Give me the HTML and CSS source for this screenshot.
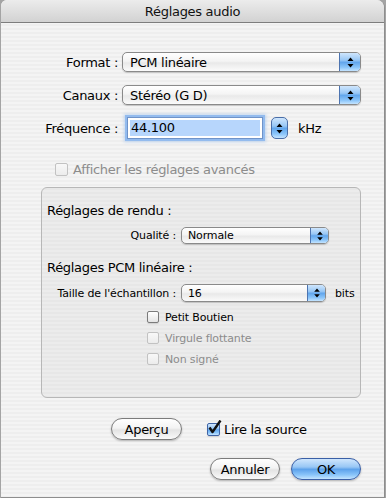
FILE: index.html
```html
<!DOCTYPE html>
<html lang="fr">
<head>
    <meta charset="UTF-8">
    <title>Réglages audio</title>
    <link rel="stylesheet" href="styles.css">
</head>
<body>
    <div class="window">
        <div class="titlebar">Réglages audio</div>

        <div class="content">
            <div class="row row-format">
                <span class="lbl">Format :</span>
                <div class="popup big format">
                    <span class="val">PCM linéaire</span>
                    <span class="cap">
                        <svg width="7" height="11" viewBox="0 0 7 11"><path d="M3.5 0.5 L6.5 4 L0.5 4 Z M0.5 7 L6.5 7 L3.5 10.5 Z" fill="#000"/></svg>
                    </span>
                </div>
            </div>

            <div class="row row-canaux">
                <span class="lbl">Canaux :</span>
                <div class="popup big format">
                    <span class="val">Stéréo (G D)</span>
                    <span class="cap">
                        <svg width="7" height="11" viewBox="0 0 7 11"><path d="M3.5 0.5 L6.5 4 L0.5 4 Z M0.5 7 L6.5 7 L3.5 10.5 Z" fill="#000"/></svg>
                    </span>
                </div>
            </div>

            <div class="row row-freq">
                <span class="lbl">Fréquence :</span>
                <div class="textfield"><span class="sel">44.100</span></div>
                <div class="stepper">
                    <svg width="7" height="11" viewBox="0 0 7 11"><path d="M3.5 0.5 L6.5 4 L0.5 4 Z M0.5 7 L6.5 7 L3.5 10.5 Z" fill="#000"/></svg>
                </div>
                <span class="unit">kHz</span>
            </div>

            <div class="row row-advanced">
                <span class="cb disabled"></span>
                <span class="cb-text disabled-text">Afficher les réglages avancés</span>
            </div>

            <div class="groupbox">
                <div class="group-title">Réglages de rendu :</div>
                <div class="row row-small row-qualite">
                    <span class="lbl-small">Qualité :</span>
                    <div class="popup small qualite">
                        <span class="val">Normale</span>
                        <span class="cap">
                            <svg width="6" height="10" viewBox="0 0 6 10"><path d="M3 0.5 L5.8 3.8 L0.2 3.8 Z M0.2 6.2 L5.8 6.2 L3 9.5 Z" fill="#000"/></svg>
                        </span>
                    </div>
                </div>

                <div class="group-title pcm-title">Réglages PCM linéaire :</div>
                <div class="row row-small row-taille">
                    <span class="lbl-small">Taille de l'échantillon :</span>
                    <div class="popup small taille">
                        <span class="val">16</span>
                        <span class="cap">
                            <svg width="6" height="10" viewBox="0 0 6 10"><path d="M3 0.5 L5.8 3.8 L0.2 3.8 Z M0.2 6.2 L5.8 6.2 L3 9.5 Z" fill="#000"/></svg>
                        </span>
                    </div>
                    <span class="unit-small">bits</span>
                </div>

                <div class="row check-row first-check">
                    <span class="cb small-cb"></span>
                    <span class="cb-small-text">Petit Boutien</span>
                </div>
                <div class="row check-row">
                    <span class="cb small-cb disabled"></span>
                    <span class="cb-small-text disabled-text">Virgule flottante</span>
                </div>
                <div class="row check-row">
                    <span class="cb small-cb disabled"></span>
                    <span class="cb-small-text disabled-text">Non signé</span>
                </div>
            </div>

            <div class="row row-preview">
                <button class="pill apercu">Aperçu</button>
                <span class="cb checked">
                    <svg width="16" height="16" viewBox="0 0 16 16"><path d="M2.5 7.5 L5.5 12 L13.5 0.5" fill="none" stroke="#111" stroke-width="2.4" stroke-linejoin="round"/></svg>
                </span>
                <span class="cb-text">Lire la source</span>
            </div>

            <div class="row row-actions">
                <button class="pill annuler">Annuler</button>
                <button class="pill ok">OK</button>
            </div>
        </div>
    </div>
</body>
</html>
```

FILE: styles.css
```css
body{
    margin: 0;
    background-color: #a4a4a4;
    font-family: "DejaVu Sans", "Liberation Sans", sans-serif;
    font-size: 13px;
    letter-spacing: -0.3px;
    color: #000000;
}

.window{
    margin-left: 1px;
    width: 383px;
    height: 497px;
    border-right: 1px solid #8e8e8e;
    border-bottom: 1px solid #8e8e8e;
    border-radius: 6px 8px 0 0;
    overflow: hidden;
    background: repeating-linear-gradient(to bottom, #eeeeee 0, #eeeeee 2px, #f4f4f4 2px, #f4f4f4 4px);
}

.titlebar{
    height: 22px;
    line-height: 23px;
    text-align: center;
    border-bottom: 1px solid #7d7d7d;
    background: linear-gradient(to bottom, #ececec, #d2d2d2);
    color: #111111;
}

.content{
    padding-top: 29px;
}

.row{
    display: flex;
    align-items: center;
}

.lbl{
    width: 117px;
    text-align: right;
    white-space: nowrap;
}

/* popup menus */
.popup{
    display: flex;
    align-items: center;
    box-sizing: border-box;
    border: 1px solid #8a8a8a;
    border-radius: 5px;
    background: linear-gradient(to bottom, #ffffff 0%, #f4f4f4 45%, #e9e9e9 55%, #fbfbfb 100%);
    box-shadow: 0 1px 1px rgba(0,0,0,0.18);
    overflow: hidden;
}

.popup .val{
    flex: 1;
    white-space: nowrap;
}

.popup .cap{
    align-self: stretch;
    display: flex;
    align-items: center;
    justify-content: center;
    border-left: 1px solid #4d74b0;
    background: linear-gradient(to bottom, #cfe6fd 0%, #98c7f5 40%, #62a6ec 52%, #8cc6fa 80%, #c4e4ff 100%);
}

.big{
    height: 20px;
    margin-left: 4px;
}

.big .val{
    padding-left: 7px;
}

.big .cap{
    width: 20px;
}

.format{
    width: 239px;
}

.row-canaux{
    margin-top: 13px;
}

/* frequency */
.row-freq{
    margin-top: 12px;
}

.textfield{
    box-sizing: border-box;
    width: 136px;
    height: 22px;
    margin-left: 9px;
    padding: 2px;
    border: 1px solid #6f93c9;
    background-color: #ffffff;
    box-shadow: 0 0 0 2px #93bbee, 0 0 3px 3px rgba(130,175,232,0.45);
    display: flex;
}

.textfield .sel{
    flex: 1;
    background-color: #b7d6fc;
    line-height: 16px;
    padding-left: 1px;
}

.stepper{
    box-sizing: border-box;
    width: 17px;
    height: 22px;
    margin-left: 8px;
    border: 1px solid #4a6ea8;
    border-radius: 5px;
    background: linear-gradient(to bottom, #cfe6fd 0%, #98c7f5 40%, #62a6ec 52%, #8cc6fa 80%, #c4e4ff 100%);
    display: flex;
    align-items: center;
    justify-content: center;
}

.unit{
    margin-left: 10px;
}

/* checkboxes */
.cb{
    box-sizing: border-box;
    width: 13px;
    height: 13px;
    border: 1px solid #7b7b7b;
    border-radius: 2px;
    background: linear-gradient(to bottom, #ffffff, #e4e4e4);
    box-shadow: 0 1px 1px rgba(0,0,0,0.12);
    position: relative;
}

.cb.disabled{
    border-color: #c2c2c2;
    background: linear-gradient(to bottom, #f8f8f8, #ececec);
    box-shadow: none;
}

.disabled-text{
    color: #8c8c8c;
}

.row-advanced{
    margin-top: 22px;
    margin-left: 54px;
    height: 16px;
}

.cb-text{
    margin-left: 5px;
}

/* group box */
.groupbox{
    box-sizing: border-box;
    margin-top: 10px;
    margin-left: 40px;
    width: 320px;
    height: 211px;
    padding: 15px 0 0 5px;
    border: 1px solid #b7b7b7;
    border-radius: 6px;
    background: repeating-linear-gradient(to bottom, #e7e7e7 0, #e7e7e7 2px, #ececec 2px, #ececec 4px);
}

.group-title{
    line-height: 16px;
    height: 16px;
}

.pcm-title{
    margin-top: 16px;
}

.row-small{
    font-size: 11px;
    letter-spacing: -0.15px;
}

.lbl-small{
    width: 129px;
    text-align: right;
    white-space: nowrap;
}

.small{
    margin-left: 5px;
    font-size: 11px;
}

.small .val{
    padding-left: 6px;
}

.small .cap{
    width: 17px;
}

.row-qualite{
    margin-top: 8px;
}

.qualite{
    width: 148px;
    height: 17px;
}

.row-taille{
    margin-top: 8px;
}

.taille{
    width: 145px;
    height: 18px;
}

.unit-small{
    margin-left: 9px;
    font-size: 11px;
}

.check-row{
    margin-left: 100px;
    height: 16px;
    margin-top: 5px;
}

.first-check{
    margin-top: 7px;
}

.small-cb{
    width: 12px;
    height: 12px;
}

.cb-small-text{
    margin-left: 6px;
    font-size: 11px;
    letter-spacing: -0.15px;
}

/* buttons */
.pill{
    box-sizing: border-box;
    height: 22px;
    padding: 0;
    border: 1px solid #7c7c7c;
    border-radius: 11px;
    font-family: "DejaVu Sans", "Liberation Sans", sans-serif;
    font-size: 13px;
    letter-spacing: -0.3px;
    color: #000000;
    background: linear-gradient(to bottom, #ffffff 0%, #f3f3f3 45%, #e3e3e3 55%, #fafafa 100%);
    box-shadow: 0 1px 2px rgba(0,0,0,0.25);
}

.row-preview{
    margin-top: 20px;
    margin-left: 110px;
}

.apercu{
    width: 71px;
}

.cb.checked{
    margin-left: 25px;
    border-color: #3f64a6;
    background: linear-gradient(to bottom, #cfe6fd 0%, #98c7f5 40%, #62a6ec 52%, #8cc6fa 80%, #c4e4ff 100%);
}

.cb.checked svg{
    position: absolute;
    left: -1px;
    top: -4px;
}

.row-preview .cb-text{
    margin-left: 4px;
}

.row-actions{
    margin-top: 18px;
    margin-left: 209px;
}

.annuler{
    width: 70px;
}

.ok{
    width: 70px;
    margin-left: 11px;
    border-color: #3a5fa6;
    background: linear-gradient(to bottom, #cfe6fd 0%, #98c7f5 40%, #5da2eb 52%, #8cc6fa 80%, #c4e4ff 100%);
}
```
